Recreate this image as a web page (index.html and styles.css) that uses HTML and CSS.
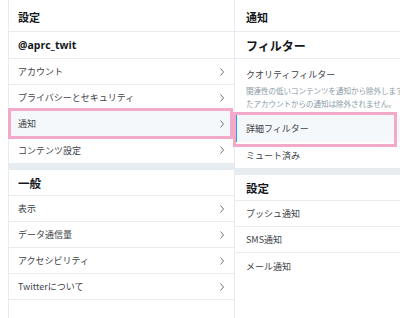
FILE: index.html
```html
<!DOCTYPE html>
<html lang="ja">
<head>
<meta charset="utf-8">
<link rel="stylesheet" href="styles.css">
</head>
<body>
<div class="page">
  <section class="col left">
    <div class="head">設定</div>
    <div class="acct">@aprc_twit</div>
    <div class="item"><span>アカウント</span><svg class="chev" viewBox="0 0 4 8" width="4" height="8"><polyline points="0.5,0.5 3.5,4 0.5,7.5"/></svg></div>
    <div class="item"><span>プライバシーとセキュリティ</span><svg class="chev" viewBox="0 0 4 8" width="4" height="8"><polyline points="0.5,0.5 3.5,4 0.5,7.5"/></svg></div>
    <div class="item sel"><span>通知</span><svg class="chev" viewBox="0 0 4 8" width="4" height="8"><polyline points="0.5,0.5 3.5,4 0.5,7.5"/></svg><div class="mark mark-l"></div></div>
    <div class="item noline"><span>コンテンツ設定</span><svg class="chev" viewBox="0 0 4 8" width="4" height="8"><polyline points="0.5,0.5 3.5,4 0.5,7.5"/></svg></div>
    <div class="band"></div>
    <div class="head h2">一般</div>
    <div class="item"><span>表示</span><svg class="chev" viewBox="0 0 4 8" width="4" height="8"><polyline points="0.5,0.5 3.5,4 0.5,7.5"/></svg></div>
    <div class="item"><span>データ通信量</span><svg class="chev" viewBox="0 0 4 8" width="4" height="8"><polyline points="0.5,0.5 3.5,4 0.5,7.5"/></svg></div>
    <div class="item"><span>アクセシビリティ</span><svg class="chev" viewBox="0 0 4 8" width="4" height="8"><polyline points="0.5,0.5 3.5,4 0.5,7.5"/></svg></div>
    <div class="item"><span>Twitterについて</span><svg class="chev" viewBox="0 0 4 8" width="4" height="8"><polyline points="0.5,0.5 3.5,4 0.5,7.5"/></svg></div>
  </section>
  <section class="col right">
    <div class="head">通知</div>
    <div class="acct big">フィルター</div>
    <div class="qual">
      <div class="qt">クオリティフィルター</div>
      <div class="qd">関連性の低いコンテンツを通知から除外します。フォローしているアカウントや最近やり取りし</div>
      <div class="qd">たアカウントからの通知は除外されません。</div>
    </div>
    <div class="item rsel"><span>詳細フィルター</span><div class="mark mark-r"></div></div>
    <div class="item noline"><span>ミュート済み</span></div>
    <div class="band"></div>
    <div class="head h3">設定</div>
    <div class="item"><span>プッシュ通知</span></div>
    <div class="item"><span>SMS通知</span></div>
    <div class="item noline"><span>メール通知</span></div>
  </section>
</div>
</body>
</html>
```
FILE: styles.css
```css
* { box-sizing: border-box; }
html, body { margin: 0; padding: 0; background: #fff; }
body {
  font-family: "Noto Sans CJK JP", "Noto Sans", sans-serif;
  color: #14171a;
  width: 400px;
  height: 318px;
  overflow: hidden;
}
.page {
  display: flex;
  padding-left: 8px;
  height: 318px;
}
.col {
  display: flex;
  flex-direction: column;
  border-left: 1px solid #e6ecf0;
  height: 318px;
}
.left { width: 227px; border-right: 1px solid #e6ecf0; }
.right { flex: 1; border-left: none; min-width: 0; }
.head {
  height: 32px;
  border-bottom: 1px solid #e6ecf0;
  font-size: 11px;
  font-weight: 700;
  display: flex;
  align-items: center;
  padding-left: 9px;
  padding-top: 2px;
  flex: none;
}
.right .head, .right .acct, .right .item, .right .qual { padding-left: 11px; }
.h2, .h3 { font-size: 11.5px; height: 26px; padding-top: 1px; }
.acct {
  height: 27px;
  border-bottom: 1px solid #e6ecf0;
  font-size: 10.5px;
  font-weight: 700;
  display: flex;
  align-items: center;
  padding-left: 9px;
  font-family: "Open Sans", "Noto Sans CJK JP", sans-serif;
  flex: none;
}
.big { font-size: 12px; font-family: "Noto Sans CJK JP", sans-serif; }
.item {
  position: relative;
  height: 26px;
  border-bottom: 1px solid #e6ecf0;
  font-size: 9px;
  color: #3d4247;
  display: flex;
  align-items: center;
  justify-content: space-between;
  padding: 0 10px 0 9px;
  flex: none;
}
.noline { border-bottom: none; height: 26px; }
.chev {
  fill: none;
  stroke: #6b7680;
  stroke-width: 1;
}
.sel { background: #f5f8fa; }
.right .rsel {
  background: #f5f8fa;
  border-left: 2px solid #1da1f2;
  padding-left: 9px;
  height: 27px;
  border-bottom: none;
}
.band { height: 7px; background: #e6ecf0; flex: none; }
.qual {
  padding: 5px 0 0 9px;
  height: 56px;
  white-space: nowrap;
  overflow: hidden;
  flex: none;
}
.qt { font-size: 9px; color: #3d4247; height: 20px; display: flex; align-items: center; }
.qd { font-size: 7.5px; color: #8899a6; line-height: 13px; }
.mark {
  position: absolute;
  border: 3px solid #f3a9c9;
  pointer-events: none;
}
.mark-l { left: -1px; right: 1px; top: -3px; bottom: -3px; }
.mark-r { left: -4px; right: 3px; top: -3px; bottom: -5px; }
```
